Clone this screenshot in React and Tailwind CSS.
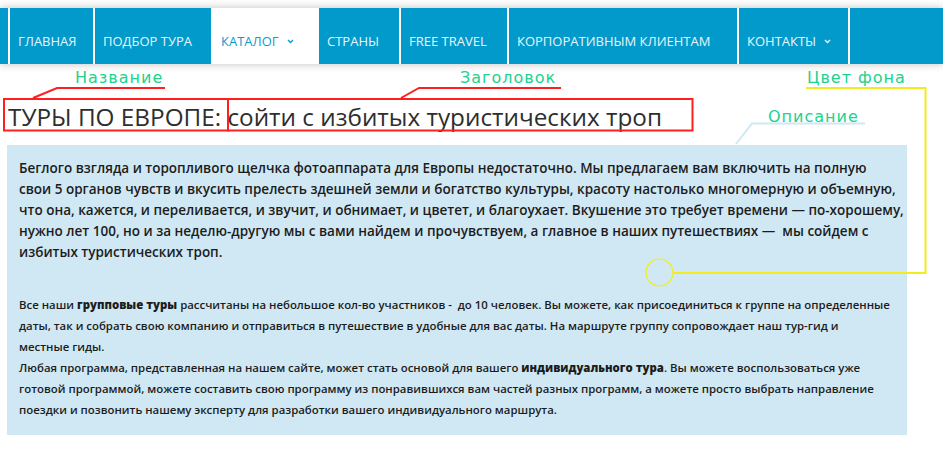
const navItems = [
  { label: "", w: "w-[8px]" },
  { label: "Главная", w: "w-[83px]" },
  { label: "Подбор тура", w: "w-[116px]" },
  { label: "Каталог", w: "w-[104px]", active: true, caret: true },
  { label: "Страны", w: "w-[80px]" },
  { label: "Free travel", w: "w-[106px]" },
  { label: "Корпоративным клиентам", w: "w-[228px]" },
  { label: "Контакты", w: "w-[109px]", caret: true },
];

const Caret = ({ color }) => (
  <svg width="7" height="5" viewBox="0 0 7 5" className="ml-[8px] mt-[4px]">
    <path d="M1 1 L3.5 3.5 L6 1" fill="none" stroke={color} strokeWidth="1.4" />
  </svg>
);

const Label = ({ children, className }) => (
  <div
    className={
      "absolute text-[16px] leading-none tracking-[1px] text-[#20d28c] " + className
    }
    style={{ fontFamily: '"DejaVu Sans", sans-serif' }}
  >
    {children}
  </div>
);

export default function App() {
  return (
    <div
      className="relative w-[943px] h-[461px] bg-white overflow-hidden"
      style={{ fontFamily: '"Open Sans", sans-serif' }}
    >
      {/* menu */}
      <nav className="mt-2 h-14 flex gap-[2px] bg-white shadow-[0_0_8px_rgba(0,0,0,0.25)]">
        {navItems.map((item, i) => (
          <div
            key={i}
            className={
              "shrink-0 flex items-start pt-[27px] pl-[8px] text-[13px] leading-[13px] uppercase whitespace-nowrap " +
              item.w +
              (item.active ? " bg-white text-[#0a9ccd]" : " bg-[#019acb] text-[#eaf5fa]")
            }
          >
            {item.label}
            {item.caret && <Caret color={item.active ? "#0a9ccd" : "#eaf5fa"} />}
          </div>
        ))}
        <div className="flex-1 bg-[#019acb]" />
      </nav>

      <h1 className="mt-[36px] ml-[8px] h-[33px] text-[24.3px] leading-[33px] text-[#2e2e2e] whitespace-nowrap">
        ТУРЫ ПО ЕВРОПЕ: сойти с избитых туристических троп
      </h1>

      <div className="mt-[12px] ml-[7px] w-[900px] h-[290px] bg-[#d0e8f4] pt-[13px] pl-[12px] text-[#1c1c1c]">
        <div className="text-[13.5px] leading-[21px] font-semibold whitespace-pre">
          <div>Беглого взгляда и торопливого щелчка фотоаппарата для Европы недостаточно. Мы предлагаем вам включить на полную</div>
          <div>свои 5 органов чувств и вкусить прелесть здешней земли и богатство культуры, красоту настолько многомерную и объемную,</div>
          <div>что она, кажется, и переливается, и звучит, и обнимает, и цветет, и благоухает. Вкушение это требует времени — по-хорошему,</div>
          <div>нужно лет 100, но и за неделю-другую мы с вами найдем и прочувствуем, а главное в наших путешествиях —  мы сойдем с</div>
          <div>избитых туристических троп.</div>
        </div>
        <div className="mt-[31px] text-[11.4px] leading-[21px] font-semibold whitespace-pre">
          <div>
            Все наши <b className="font-extrabold">групповые туры</b> рассчитаны на небольшое кол-во участников -  до 10 человек. Вы можете, как присоединиться к группе на определенные
          </div>
          <div>даты, так и собрать свою компанию и отправиться в путешествие в удобные для вас даты. На маршруте группу сопровождает наш тур-гид и</div>
          <div>местные гиды.</div>
          <div>
            Любая программа, представленная на нашем сайте, может стать основой для вашего <b className="font-extrabold">индивидуального тура</b>. Вы можете воспользоваться уже
          </div>
          <div>готовой программой, можете составить свою программу из понравившихся вам частей разных программ, а можете просто выбрать направление</div>
          <div>поездки и позвонить нашему эксперту для разработки вашего индивидуального маршрута.</div>
        </div>
      </div>

      {/* annotation drawing */}
      <svg className="absolute inset-0 pointer-events-none" width="943" height="461">
        <g fill="none" stroke="#ff1f1f" strokeWidth="2">
          <rect x="4" y="99" width="224" height="31.5" />
          <rect x="228" y="99" width="464.5" height="31.5" />
          <polyline points="165,88 57,88 33,98" />
          <polyline points="561,88 419,88 401,98" />
        </g>
        <polyline points="865,123.5 752,123.5 736,144" fill="none" stroke="#cfe8f6" strokeWidth="2" />
        <polyline points="806,88 925.5,88 925.5,273 673,273" fill="none" stroke="#f2ec1c" strokeWidth="2" />
        <circle cx="659.5" cy="272.5" r="13.5" fill="none" stroke="#f2ec1c" strokeWidth="1.2" />
      </svg>

      <Label className="left-[75px] top-[70px]">Название</Label>
      <Label className="left-[460px] top-[70px]">Заголовок</Label>
      <Label className="left-[807px] top-[70px]">Цвет фона</Label>
      <Label className="left-[768px] top-[109px]">Описание</Label>
    </div>
  );
}
